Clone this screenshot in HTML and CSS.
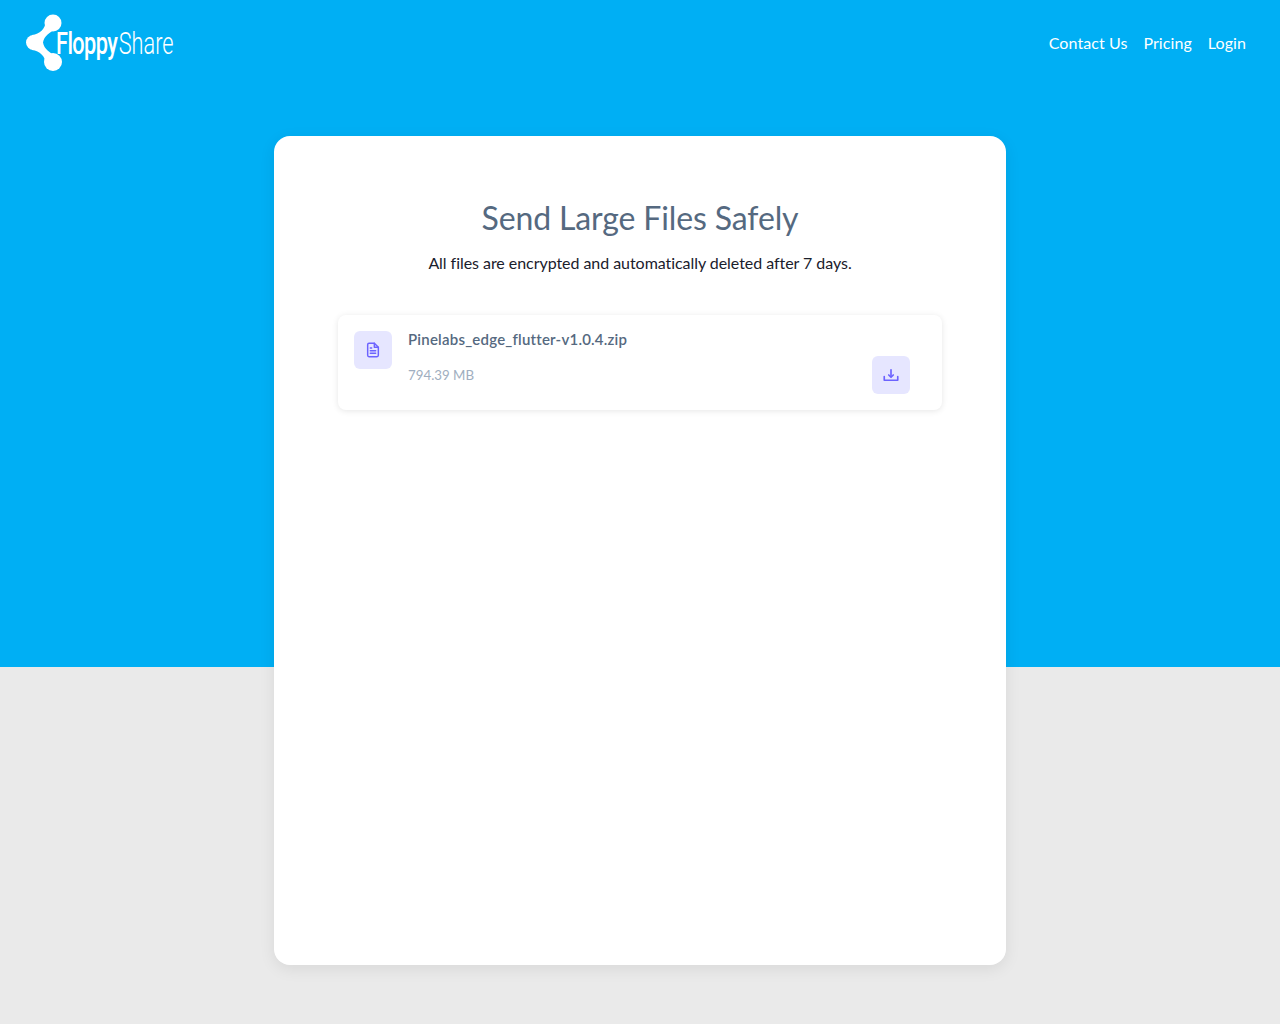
FILE: index.html
```html
<!DOCTYPE html>
<html lang="en">
<head>
  <meta charset="UTF-8" />
  <title>FloppyShare</title>
  <link rel="stylesheet" href="styles.css">
</head>
<body>
  <div class="navbar">
    <a class="logo" href="#">
      <svg class="logo-mark" width="38" height="58" viewBox="0 0 38 58" fill="#fff">
        <circle cx="27" cy="9" r="8.5" />
        <circle cx="7.5" cy="28.5" r="7.5" />
        <circle cx="27" cy="48" r="9" />
        <path d="M20 7 C19 15 14 20 6 21 L6 36 C14 37 19 42 20 50 L30 42 C24 39 18 35 17 28.5 C18 22 24 18 30 15 Z" />
      </svg>
      <span class="logo-text"><b>Floppy</b>Share</span>
    </a>
    <div class="menu">
      <a href="#">Contact Us</a>
      <a href="#">Pricing</a>
      <a href="#">Login</a>
    </div>
  </div>

  <div class="container">
    <h2>Send Large Files Safely</h2>
    <p class="subtitle">All files are encrypted and automatically deleted after 7 days.</p>

    <div class="file-card">
      <div class="icon-box">
        <svg width="16" height="16" viewBox="0 0 24 24" fill="none" stroke="#6c63ff" stroke-width="2.2" stroke-linecap="round" stroke-linejoin="round">
          <path d="M14 2H6a2 2 0 0 0-2 2v16a2 2 0 0 0 2 2h12a2 2 0 0 0 2-2V8z" />
          <path d="M14 2v6h6" />
          <path d="M8 13h8M8 17h8M8 9h2" />
        </svg>
      </div>
      <div class="file-info">
        <div class="file-name">Pinelabs_edge_flutter-v1.0.4.zip</div>
        <div class="file-row">
          <span class="file-size">794.39 MB</span>
          <button class="icon-box" type="button" aria-label="Download">
            <svg width="18" height="18" viewBox="0 0 24 24" fill="none" stroke="#6c63ff" stroke-width="2.2" stroke-linecap="round" stroke-linejoin="round">
              <path d="M3 14v5h18v-5" />
              <path d="M12 5v9" />
              <path d="M9 12l3 3 3-3" />
            </svg>
          </button>
        </div>
      </div>
    </div>
  </div>
</body>
</html>
```

FILE: styles.css
```css
*, *::before, *::after { box-sizing: border-box; }
body {
  font-family: Lato, sans-serif;
  background: linear-gradient(#00aff4 667px, #eaeaea 667px);
  margin: 0;
  min-height: 1024px;
  padding: 0;
}
.navbar {
  height: 86px;
  padding: 0 34px 0 26px;
  display: flex;
  justify-content: space-between;
  align-items: center;
}
.logo {
  display: flex;
  align-items: center;
  color: #fff;
  text-decoration: none;
}
.logo-mark { display: block; }
.logo-text {
  font-family: Roboto, sans-serif;
  font-size: 31px;
  font-weight: 300;
  margin-left: -8px;
  transform: scaleX(0.7);
  transform-origin: left center;
  width: 118px;
  white-space: nowrap;
}
.logo-text b {
  font-weight: 500;
  letter-spacing: -0.8px;
  margin-right: 2px;
}
.menu {
  display: flex;
  gap: 16px;
  margin-top: -2px;
}
.menu a {
  color: #fff;
  font-size: 16px;
  letter-spacing: 0.08px;
  text-decoration: none;
}
.container {
  width: 732px;
  height: 829px;
  margin: 50px auto 0;
  background-color: #fff;
  padding: 64px 64px 0;
  border-radius: 16px;
  box-shadow: 0 4px 16px rgba(0, 0, 0, 0.08);
}
h2 {
  margin: 0;
  text-align: center;
  color: #556980;
  font-size: 32px;
  font-weight: 400;
  letter-spacing: -0.13px;
  line-height: 36px;
}
.subtitle {
  margin: 15px 0 0;
  text-align: center;
  color: #1a202c;
  font-size: 16px;
  letter-spacing: -0.05px;
  line-height: 24px;
}
.file-card {
  display: flex;
  align-items: flex-start;
  gap: 16px;
  height: 95px;
  margin-top: 40px;
  padding: 16px 32px 16px 16px;
  border-radius: 8px;
  box-shadow: 0 1px 6px rgba(0, 0, 0, 0.1);
}
.icon-box {
  width: 38px;
  height: 38px;
  flex: none;
  display: flex;
  align-items: center;
  justify-content: center;
  padding: 0;
  border: none;
  border-radius: 6px;
  background-color: #e6e6ff;
}
.file-info {
  flex: 1;
  margin-top: -1px;
}
.file-name {
  color: #556980;
  font-size: 15px;
  font-weight: 600;
  letter-spacing: 0.22px;
  line-height: 18px;
}
.file-row {
  display: flex;
  justify-content: space-between;
  align-items: center;
  margin-top: 8px;
}
.file-size {
  color: #a0aec0;
  font-size: 13.3px;
}
```
